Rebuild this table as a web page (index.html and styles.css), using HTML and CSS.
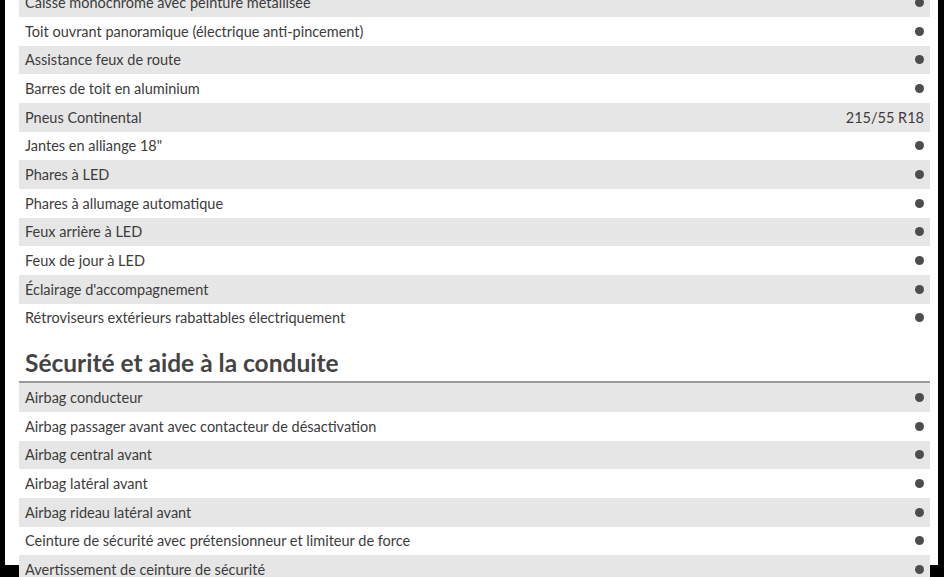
FILE: index.html
```html
<!DOCTYPE html>
<html lang="fr">
<head>
<meta charset="utf-8">
<link rel="stylesheet" href="styles.css">
</head>
<body>
<div class="page">
  <div class="list first">
    <div class="row"><span>Caisse monochrome avec peinture métallisée</span><i class="dot"></i></div>
    <div class="row"><span>Toit ouvrant panoramique (électrique anti-pincement)</span><i class="dot"></i></div>
    <div class="row"><span>Assistance feux de route</span><i class="dot"></i></div>
    <div class="row"><span>Barres de toit en aluminium</span><i class="dot"></i></div>
    <div class="row"><span>Pneus Continental</span><span class="val">215/55 R18</span></div>
    <div class="row"><span>Jantes en alliange 18"</span><i class="dot"></i></div>
    <div class="row"><span>Phares à LED</span><i class="dot"></i></div>
    <div class="row"><span>Phares à allumage automatique</span><i class="dot"></i></div>
    <div class="row"><span>Feux arrière à LED</span><i class="dot"></i></div>
    <div class="row"><span>Feux de jour à LED</span><i class="dot"></i></div>
    <div class="row"><span>Éclairage d'accompagnement</span><i class="dot"></i></div>
    <div class="row"><span>Rétroviseurs extérieurs rabattables électriquement</span><i class="dot"></i></div>
  </div>
  <h2 class="section-title">Sécurité et aide à la conduite</h2>
  <div class="list">
    <div class="row"><span>Airbag conducteur</span><i class="dot"></i></div>
    <div class="row"><span>Airbag passager avant avec contacteur de désactivation</span><i class="dot"></i></div>
    <div class="row"><span>Airbag central avant</span><i class="dot"></i></div>
    <div class="row"><span>Airbag latéral avant</span><i class="dot"></i></div>
    <div class="row"><span>Airbag rideau latéral avant</span><i class="dot"></i></div>
    <div class="row"><span>Ceinture de sécurité avec prétensionneur et limiteur de force</span><i class="dot"></i></div>
    <div class="row"><span>Avertissement de ceinture de sécurité</span><i class="dot"></i></div>
  </div>
</div>
</body>
</html>
```
FILE: styles.css
```css
html, body {
  margin: 0;
  padding: 0;
  background: #000;
  height: 100%;
  overflow: hidden;
}
.page {
  background: #fff;
  margin: 0 6px 0 5px;
  padding: 0 8px 0 14px;
  height: 100%;
  font-family: "Lato", "Liberation Sans", sans-serif;
  color: #3c3c3c;
}
.list.first {
  margin-top: -11.67px;
}
.row {
  height: 28.67px;
  display: flex;
  align-items: center;
  justify-content: space-between;
  padding: 0 6px;
  font-size: 14.5px;
}
.row:nth-child(odd) {
  background: #e6e6e6;
}
.dot {
  width: 9px;
  height: 9px;
  border-radius: 50%;
  background: #4d4d4d;
  display: block;
}
.val {
  font-size: 14.5px;
}
.section-title {
  margin: 0;
  padding: 19px 6px 6px;
  font-size: 24.5px;
  font-weight: 700;
  line-height: 24px;
  color: #444;
  border-bottom: 2px solid #9a9a9a;
}
```
